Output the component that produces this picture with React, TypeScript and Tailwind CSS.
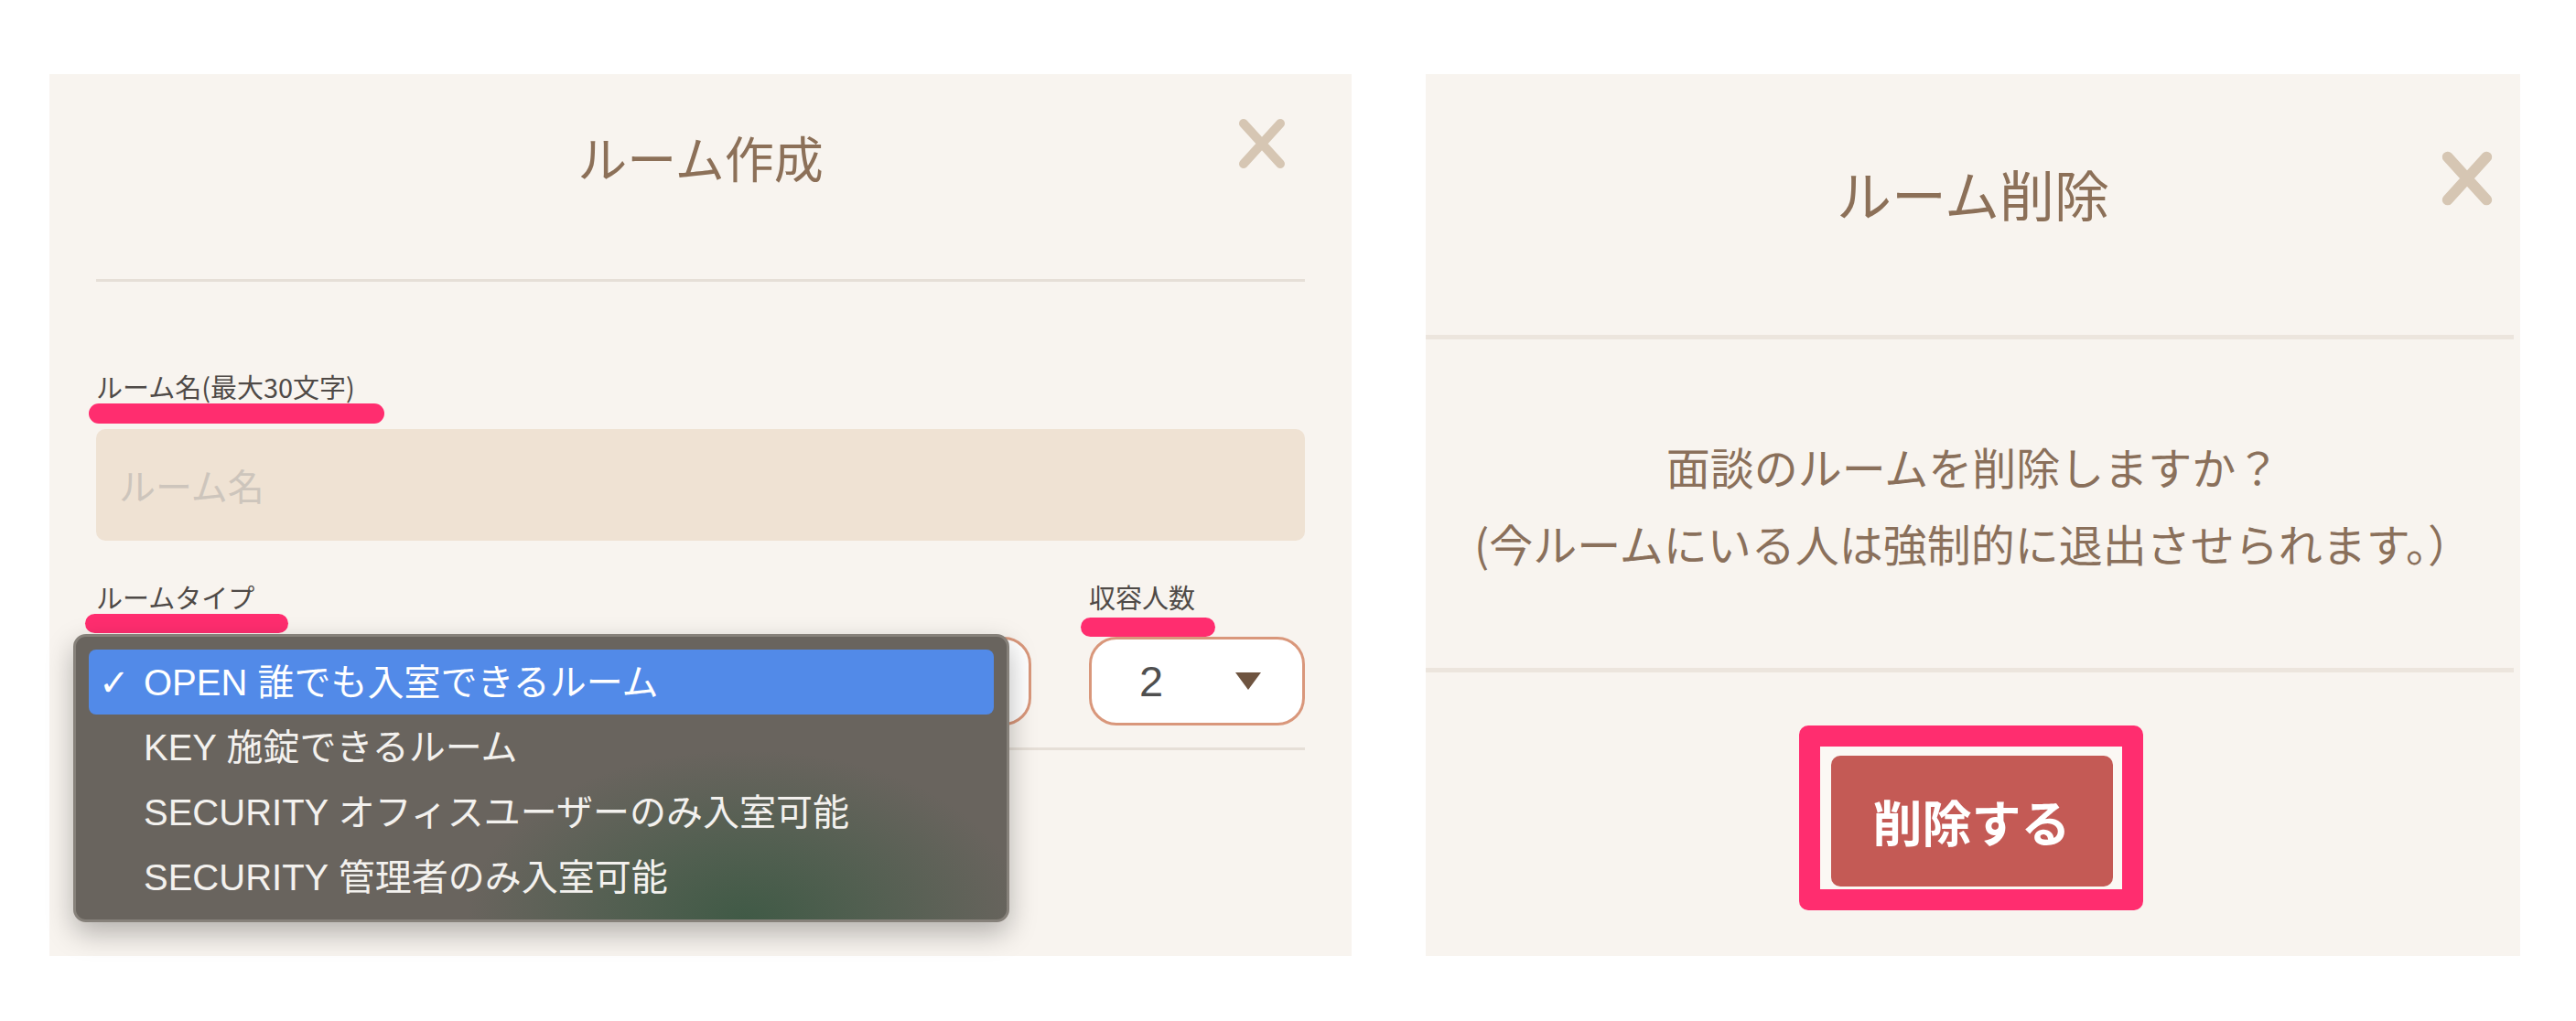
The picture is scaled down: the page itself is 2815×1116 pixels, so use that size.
function CloseX({ size, stroke }: { size: number; stroke: number }) {
  return (
    <svg width={size} height={size} viewBox="0 0 60 60" fill="none">
      <path d="M10 8 L50 52 M50 8 L10 52" stroke="#d6c6b3" strokeWidth={stroke} strokeLinecap="round" />
    </svg>
  );
}

function CreatePanel() {
  const items = [
    "KEY 施錠できるルーム",
    "SECURITY オフィスユーザーのみ入室可能",
    "SECURITY 管理者のみ入室可能",
  ];
  return (
    <div className="relative w-[1423px] h-[964px] bg-[#f8f4ef] flex flex-col">
      <div className="relative h-[224px] pt-[64px] text-center">
        <div className="text-[54px] leading-[54px] text-[#8c7058]">ルーム作成</div>
        <div className="absolute right-[68px] top-[46px]">
          <CloseX size={60} stroke={10} />
        </div>
      </div>
      <div className="px-[51px] flex flex-col">
        <div className="h-[3px] bg-[#e6dfd7]" />
        <div className="mt-[97px] text-[29px] leading-[35px] text-[#4f4a47]">ルーム名(最大30文字)</div>
        <div className="mt-[1px] -ml-[8px] w-[323px] h-[22px] rounded-full bg-[#ff2d6f]" />
        <div className="mt-[6px] h-[122px] rounded-[10px] bg-[#efe2d3] flex items-center pl-[25px] text-[40px] text-[#cdc5bc]">
          ルーム名
        </div>
        <div className="mt-[44px] flex gap-[63px]">
          <div className="flex-1 flex flex-col">
            <div className="text-[29px] leading-[35px] text-[#4f4a47]">ルームタイプ</div>
            <div className="mt-[1px] -ml-[12px] w-[222px] h-[21px] rounded-full bg-[#ff2d6f]" />
            <div className="mt-[4px] h-[97px] border-[3px] border-[#d9977b] rounded-[30px] bg-white" />
          </div>
          <div className="w-[236px] flex flex-col">
            <div className="text-[29px] leading-[35px] text-[#4f4a47]">収容人数</div>
            <div className="mt-[5px] -ml-[9px] w-[147px] h-[21px] rounded-full bg-[#ff2d6f]" />
            <div className="h-[97px] border-[3px] border-[#d9977b] rounded-[30px] bg-white flex items-center justify-between pl-[52px] pr-[45px]">
              <span className="font-['Liberation_Sans',sans-serif] text-[47px] leading-none text-[#4f4f4f]">2</span>
              <svg width="28" height="19" viewBox="0 0 28 19">
                <path d="M0 0 H28 L14 19 Z" fill="#6e5440" />
              </svg>
            </div>
          </div>
        </div>
        <div className="mt-[24px] h-[3px] bg-[#e6dfd7]" />
      </div>

      <div className="absolute left-[26px] top-[612px] w-[1023px] h-[315px] rounded-[14px] border-[3px] border-[#86817a] bg-[#69645e] bg-[radial-gradient(ellipse_30%_60%_at_72%_100%,#405a46_0%,rgba(67,92,72,0.65)_40%,rgba(105,100,94,0)_100%)] p-[14px] shadow-[0_12px_30px_rgba(0,0,0,0.28)] font-['Liberation_Sans','Noto_Sans_CJK_JP',sans-serif] text-[40px] text-[#f3f1ee]">
        <div className="h-[71px] rounded-[8px] bg-[#528ae8] flex items-center text-white">
          <span className="w-[60px] pl-[11px] font-['DejaVu_Sans',sans-serif] text-[40px] leading-none">✓</span>
          <span>OPEN 誰でも入室できるルーム</span>
        </div>
        {items.map((t) => (
          <div key={t} className="h-[71px] flex items-center pl-[60px]">
            {t}
          </div>
        ))}
      </div>
    </div>
  );
}

function DeletePanel() {
  return (
    <div className="relative w-[1196px] h-[964px] bg-[#f8f4ef] flex flex-col">
      <div className="relative h-[285px] pt-[100px] text-center">
        <div className="text-[60px] leading-[60px] text-[#8c7058]">ルーム削除</div>
        <div className="absolute right-[26px] top-[82px]">
          <CloseX size={64} stroke={11} />
        </div>
      </div>
      <div className="h-[5px] mr-[7px] bg-[#ece5dd]" />
      <div className="h-[359px] flex flex-col items-center justify-center text-[48px] leading-[84px] text-[#8a705b]">
        <div>面談のルームを削除しますか？</div>
        <div>(今ルームにいる人は強制的に退出させられます。）</div>
      </div>
      <div className="h-[5px] mr-[7px] bg-[#ece5dd]" />
      <div className="flex justify-center pt-[58px] pr-[5px]">
        <div className="border-[23px] border-[#ff2d6f] rounded-[10px] bg-[#fbf8f4] pt-[10px] pb-[3px] pl-[12px] pr-[10px]">
          <div className="w-[308px] h-[143px] rounded-[10px] bg-[#c45a55] flex items-center justify-center text-white font-bold text-[54px]">
            削除する
          </div>
        </div>
      </div>
    </div>
  );
}

export default function App() {
  return (
    <div className="w-[2815px] h-[1116px] bg-white flex items-start pt-[81px] pl-[54px] gap-[81px] font-['Noto_Sans_CJK_JP',sans-serif]">
      <CreatePanel />
      <DeletePanel />
    </div>
  );
}
